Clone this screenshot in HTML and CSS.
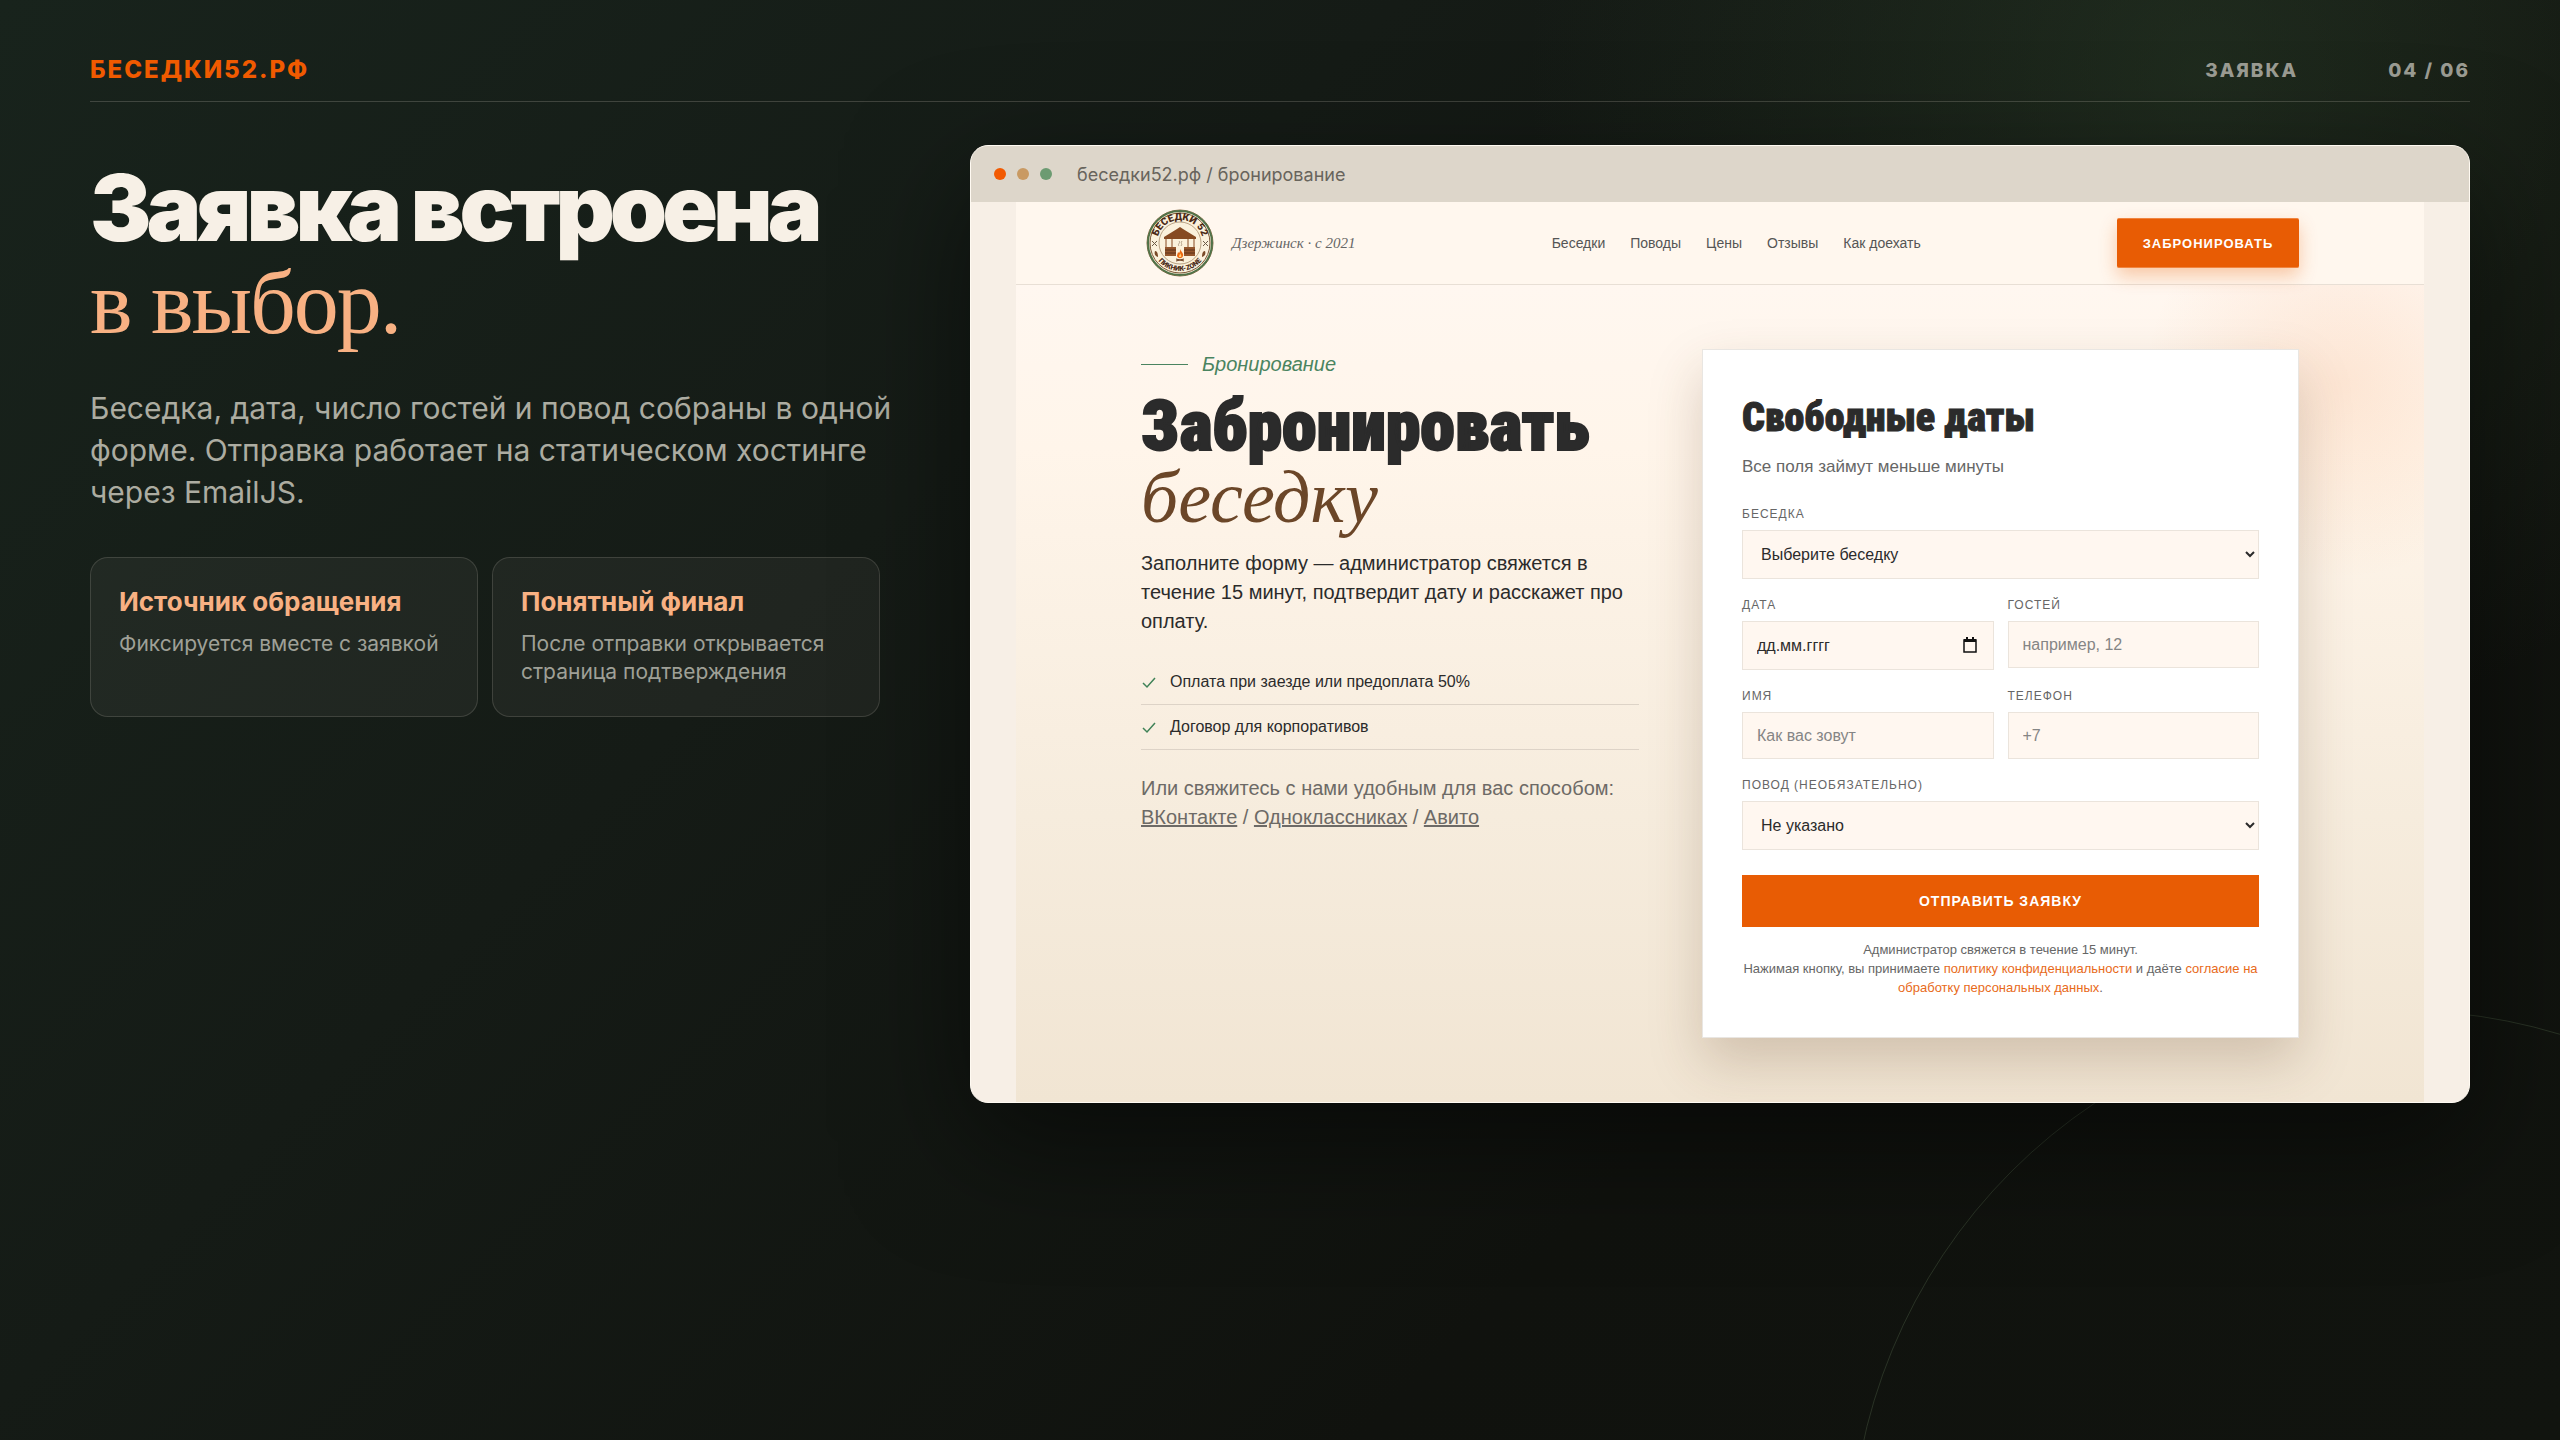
FILE: index.html
```html
<!DOCTYPE html>
<html lang="ru">
<head>
    <meta charset="UTF-8">
    <meta name="viewport" content="width=device-width, initial-scale=1.0">
    <title>Беседки52.рф — Заявка</title>
    <link rel="stylesheet" href="styles.css">
</head>
<body>
    <div class="slide">
        <div class="ring"></div>

        <header class="topbar">
            <div class="brand">БЕСЕДКИ52.РФ</div>
            <div class="topbar-meta">
                <span>ЗАЯВКА</span>
                <span>04 / 06</span>
            </div>
        </header>

        <main class="content">
            <section class="intro">
                <h1>Заявка встроена <em>в выбор.</em></h1>
                <p class="lead">Беседка, дата, число гостей и повод собраны в одной форме. Отправка работает на статическом хостинге через EmailJS.</p>
                <div class="cards">
                    <div class="card">
                        <h3>Источник обращения</h3>
                        <p>Фиксируется вместе с заявкой</p>
                    </div>
                    <div class="card">
                        <h3>Понятный финал</h3>
                        <p>После отправки открывается страница подтверждения</p>
                    </div>
                </div>
            </section>

            <!-- Окно браузера -->
            <section class="browser">
                <div class="browser-bar">
                    <span class="dot dot-red"></span>
                    <span class="dot dot-sand"></span>
                    <span class="dot dot-green"></span>
                    <span class="address">беседки52.рф / бронирование</span>
                </div>

                <div class="site">
                    <div class="site-header">
                        <div class="site-brand">
                            <svg class="logo" viewBox="0 0 68 68" role="img" aria-label="Беседки 52">
                                <defs>
                                    <path id="arc-top" d="M11 34a23 23 0 0 1 46 0"/>
                                    <path id="arc-bottom" d="M6 34a28 28 0 0 0 56 0"/>
                                </defs>
                                <circle cx="34" cy="34" r="33" fill="#fbf1dc" stroke="#8a6a45" stroke-width="1"/>
                                <circle cx="34" cy="34" r="32" fill="none" stroke="#4f7248" stroke-width="2"/>
                                <circle cx="34" cy="34" r="30" fill="none" stroke="#7a5636" stroke-width="1"/>
                                <circle cx="34" cy="34" r="21" fill="none" stroke="#b9a284" stroke-width="1"/>
                                <text class="logo-top"><textPath href="#arc-top" startOffset="50%" text-anchor="middle">БЕСЕДКИ 52</textPath></text>
                                <text class="logo-bottom"><textPath href="#arc-bottom" startOffset="50%" text-anchor="middle">ПИКНИК-ZONE</textPath></text>
                                <!-- беседка -->
                                <path d="M34 18l-3 2-13 8v2h32v-2l-13-8z" fill="#874a22"/>
                                <path d="M20 30v17M26 30v8M42 30v8M48 30v17" stroke="#874a22" stroke-width="1" fill="none"/>
                                <path d="M19 38h11v9H19zM38 38h11v9H38z" fill="#93552c"/>
                                <path d="M19 41h11M38 41h11M19 44h11M38 44h11" stroke="#5f3218" stroke-width="1"/>
                                <path d="M33 37c-2-2 2-3 0-5M35 37c2-2-1-3 1-5" stroke="#b3a089" stroke-width="1" fill="none"/>
                                <!-- костёр -->
                                <path d="M34 40c1 3 4 4 3 7-1 3-5 3-6 0 0-2 1-3 1-4l1 1c1-1 1-2 1-4z" fill="#ee6a12"/>
                                <path d="M34 44c1 2 2 3 1 4h-2c0-2 1-2 1-4z" fill="#ffd27a"/>
                                <path d="M30 52l8-2M30 50l8 2" stroke="#6b3d1e" stroke-width="1"/>
                                <path d="M6 32l5 5M11 32l-5 5M57 32l5 5M62 32l-5 5" stroke="#6b5a45" stroke-width="1"/>
                                <path d="M9 42c2 0 3 2 3 6-3-1-4-3-3-6zM59 42c-2 0-3 2-3 6 3-1 4-3 3-6z" fill="#7a4a28"/>
                            </svg>
                            <span class="since">Дзержинск · с 2021</span>
                        </div>
                        <nav class="site-nav">
                            <a href="#">Беседки</a>
                            <a href="#">Поводы</a>
                            <a href="#">Цены</a>
                            <a href="#">Отзывы</a>
                            <a href="#">Как доехать</a>
                        </nav>
                        <button class="book-btn" type="button">ЗАБРОНИРОВАТЬ</button>
                    </div>

                    <div class="booking">
                        <div class="booking-info">
                            <div class="eyebrow">Бронирование</div>
                            <h2>Забронировать <em>беседку</em></h2>
                            <p class="booking-text">Заполните форму — администратор свяжется в течение 15 минут, подтвердит дату и расскажет про оплату.</p>
                            <ul class="perks">
                                <li>
                                    <svg viewBox="0 0 16 16"><path d="M2 9l4 4 8-9"/></svg>
                                    Оплата при заезде или предоплата 50%
                                </li>
                                <li>
                                    <svg viewBox="0 0 16 16"><path d="M2 9l4 4 8-9"/></svg>
                                    Договор для корпоративов
                                </li>
                            </ul>
                            <p class="contacts">Или свяжитесь с нами удобным для вас способом: <a href="#">ВКонтакте</a> / <a href="#">Одноклассниках</a> / <a href="#">Авито</a></p>
                        </div>

                        <form class="booking-form">
                            <h3>Свободные даты</h3>
                            <p class="form-note">Все поля займут меньше минуты</p>
                            <div class="field">
                                <label for="place">Беседка</label>
                                <select id="place"><option>Выберите беседку</option></select>
                            </div>
                            <div class="field-row">
                                <div class="field">
                                    <label for="date">Дата</label>
                                    <div class="date-box">
                                        <input class="date-input" id="date" type="text" placeholder="дд.мм.гггг">
                                        <svg class="calendar" viewBox="0 0 14 16"><path d="M1 3h12v12H1z" fill="none" stroke="#111" stroke-width="1.5"/><path d="M1 2h12v3H1zM3 0h2v3H3zM9 0h2v3H9z" fill="#111"/></svg>
                                    </div>
                                </div>
                                <div class="field">
                                    <label for="guests">Гостей</label>
                                    <input id="guests" type="text" placeholder="например, 12">
                                </div>
                            </div>
                            <div class="field-row">
                                <div class="field">
                                    <label for="name">Имя</label>
                                    <input id="name" type="text" placeholder="Как вас зовут">
                                </div>
                                <div class="field">
                                    <label for="phone">Телефон</label>
                                    <input id="phone" type="tel" placeholder="+7">
                                </div>
                            </div>
                            <div class="field">
                                <label for="reason">Повод (необязательно)</label>
                                <select id="reason"><option>Не указано</option></select>
                            </div>
                            <button class="submit-btn" type="button">ОТПРАВИТЬ ЗАЯВКУ</button>
                            <p class="legal">Администратор свяжется в течение 15 минут.<br>Нажимая кнопку, вы принимаете <a href="#">политику конфиденциальности</a> и даёте <a href="#">согласие на обработку персональных данных</a>.</p>
                        </form>
                    </div>
                </div>
            </section>
        </main>
    </div>
</body>
</html>
```
FILE: styles.css
```css
* {
    box-sizing: border-box;
}

body {
    margin: 0;
    font-family: Inter, "Liberation Sans", sans-serif;
    color: #f7f0e6;
    background-color: #10130e;
}

h1, h2, h3, p, ul {
    margin: 0;
    padding: 0;
}

.slide {
    position: relative;
    min-height: 100vh;
    padding: 48px 90px 90px;
    overflow: hidden;
    background:
        radial-gradient(circle at 86% 5%, rgba(56, 84, 54, 0.34), transparent 26%),
        linear-gradient(135deg, #18231c 0%, #151b16 35%, #10120e 70%, #11140f 100%);
}

.ring {
    position: absolute;
    right: -390px;
    bottom: -670px;
    width: 1100px;
    height: 1100px;
    border: 1px solid rgba(120, 150, 110, 0.24);
    border-radius: 50%;
}

/* Шапка */
.topbar {
    display: flex;
    justify-content: space-between;
    align-items: center;
    height: 54px;
    padding-bottom: 11px;
    border-bottom: 1px solid rgba(247, 240, 230, 0.18);
}

.brand {
    font-size: 24px;
    font-weight: 800;
    letter-spacing: 2px;
    color: #f05a00;
}

.topbar-meta {
    display: flex;
    gap: 90px;
    padding-top: 3px;
    font-size: 19px;
    font-weight: 800;
    letter-spacing: 2px;
    color: #9b9c93;
}

.content {
    position: relative;
    display: grid;
    grid-template-columns: minmax(0, 790fr) minmax(0, 1500fr);
    gap: 90px;
    align-items: start;
    margin-top: 43px;
}

/* Левая колонка */
.intro {
    padding-top: 18px;
}

.intro h1 {
    font-size: 92px;
    line-height: 90px;
    font-weight: 900;
    letter-spacing: -5px;
    white-space: nowrap;
}

.intro h1 em {
    display: block;
    margin-top: 5px;
    font-family: "Liberation Serif", serif;
    font-size: 90px;
    font-style: normal;
    font-weight: 400;
    letter-spacing: -2px;
    color: #f8b183;
}

.lead {
    margin: 39px -16px 0 0;
    font-size: 30px;
    line-height: 42px;
    color: #acaca1;
}

.cards {
    display: grid;
    grid-template-columns: 1fr 1fr;
    gap: 14px;
    margin-top: 44px;
}

.card {
    min-height: 160px;
    padding: 28px;
    border: 1px solid rgba(247, 240, 230, 0.14);
    border-radius: 18px;
    background-color: rgba(247, 240, 230, 0.05);
}

.card h3 {
    font-size: 26px;
    line-height: 32px;
    font-weight: 700;
    color: #f8b183;
}

.card p {
    margin-top: 12px;
    font-size: 21px;
    line-height: 28px;
    color: #9fa097;
}

/* Окно браузера */
.browser {
    overflow: hidden;
    border: 1px solid #fffaf2;
    border-radius: 18px;
    background-color: #f7efe6;
    box-shadow: 0 40px 120px rgba(0, 0, 0, 0.5);
}

.browser-bar {
    display: flex;
    align-items: center;
    gap: 11px;
    height: 56px;
    padding: 0 23px;
    background-color: #ddd6ca;
}

.dot {
    width: 12px;
    height: 12px;
    border-radius: 50%;
}

.dot-red {
    background-color: #f25a02;
}

.dot-sand {
    background-color: #c99a63;
}

.dot-green {
    background-color: #6c9b72;
}

.address {
    margin-left: 14px;
    font-size: 18px;
    color: #68645c;
}

.site {
    margin: 0 45px;
    font-family: "Liberation Sans", Arial, sans-serif;
    color: #2b2b2b;
}

.site-header {
    display: flex;
    justify-content: space-between;
    align-items: center;
    height: 83px;
    padding: 0 125px;
    border-bottom: 1px solid #e8dfd5;
    background-color: #fff7ee;
}

.site-brand {
    display: flex;
    align-items: center;
    gap: 18px;
    padding-left: 5px;
}

.logo {
    width: 68px;
    height: 68px;
}

.logo-top {
    font-family: Roboto, sans-serif;
    font-size: 10px;
    font-weight: 900;
    fill: #4a2a17;
}

.logo-bottom {
    font-family: Roboto, sans-serif;
    font-size: 7px;
    font-weight: 900;
    fill: #4a2a17;
}

.since {
    font-family: "Liberation Serif", serif;
    font-size: 15px;
    font-style: italic;
    color: #666;
}

.site-nav {
    display: flex;
    gap: 25px;
    font-size: 14px;
}

.site-nav a {
    color: #555;
    text-decoration: none;
}

.book-btn {
    width: 182px;
    height: 50px;
    padding: 0;
    border: 1px solid #f08540;
    border-width: 1px 0;
    border-radius: 2px;
    background-color: #e85c04;
    box-shadow: 0 8px 18px rgba(232, 92, 4, 0.3);
    font-family: inherit;
    font-size: 13px;
    font-weight: 700;
    letter-spacing: 1px;
    color: #fff;
}

.booking {
    display: grid;
    grid-template-columns: minmax(0, 498fr) minmax(0, 597fr);
    gap: 63px;
    align-items: start;
    padding: 64px 125px;
    background:
        radial-gradient(circle at 94% 12%, rgba(240, 130, 60, 0.14), transparent 13%),
        linear-gradient(180deg, #fff7f0 0%, #fff5ea 20%, #f6ecdd 65%, #f1e5d3 100%);
}

.eyebrow {
    display: flex;
    align-items: center;
    gap: 14px;
    padding-top: 3px;
    font-size: 20px;
    line-height: 24px;
    font-style: italic;
    color: #4a8460;
}

.eyebrow::before {
    content: "";
    width: 47px;
    height: 1px;
    background-color: #4a8460;
}

.booking-info h2 {
    margin-top: 16px;
    font-family: Impact, "Roboto Condensed", Roboto, sans-serif;
    font-size: 70px;
    line-height: 68px;
    font-weight: 900;
    color: #2b2b2b;
    -webkit-text-stroke: 2px #2b2b2b;
}

.booking-info h2 em {
    display: block;
    margin-top: 3px;
    font-family: "Liberation Serif", serif;
    font-size: 74px;
    font-weight: 400;
    font-style: italic;
    color: #6b4628;
    -webkit-text-stroke: 0;
}

.booking-text {
    margin-top: 18px;
    font-size: 20px;
    line-height: 29px;
}

.perks {
    margin-top: 24px;
    list-style: none;
}

.perks li {
    display: flex;
    align-items: center;
    gap: 13px;
    height: 45px;
    border-bottom: 1px solid #ddd3c7;
    font-size: 16px;
}

.perks svg {
    width: 16px;
    height: 16px;
    fill: none;
    stroke: #3f8257;
    stroke-width: 1.5;
}

.contacts {
    margin-top: 24px;
    font-size: 20px;
    line-height: 29px;
    color: #6d6a66;
}

.contacts a {
    color: inherit;
}

/* Форма */
.booking-form {
    padding: 39px 39px 40px;
    border: 1px solid #e9e6e2;
    background-color: #fff;
    box-shadow: 0 24px 50px rgba(90, 60, 30, 0.22);
}

.booking-form h3 {
    font-family: Impact, "Roboto Condensed", Roboto, sans-serif;
    font-size: 40px;
    line-height: 58px;
    font-weight: 900;
    -webkit-text-stroke: 1px #2b2b2b;
}

.form-note {
    margin-top: 8px;
    font-size: 17px;
    line-height: 24px;
    color: #666;
}

.field {
    margin-top: 17px;
}

.form-note + .field {
    margin-top: 26px;
}

.field-row {
    display: grid;
    grid-template-columns: 1fr 1fr;
    gap: 14px;
}

.field label {
    display: block;
    margin-bottom: 7px;
    font-size: 12px;
    line-height: 18px;
    letter-spacing: 1px;
    text-transform: uppercase;
    color: #666;
}

.field input, .field select {
    display: block;
    width: 100%;
    height: 47px;
    padding: 0 14px;
    border: 1px solid #ebe4dc;
    border-radius: 0;
    background-color: #fff7f0;
    font-family: inherit;
    font-size: 16px;
    color: #2b2b2b;
}

.field select {
    height: 49px;
}

.field input::placeholder {
    color: #858585;
}

.date-box {
    position: relative;
}

.field .date-input {
    height: 49px;
}

.field .date-input::placeholder {
    color: #2b2b2b;
}

.calendar {
    position: absolute;
    top: 16px;
    right: 17px;
    width: 14px;
    height: 16px;
}

.submit-btn {
    display: block;
    width: 100%;
    height: 52px;
    margin-top: 25px;
    border: 0;
    background-color: #e85c04;
    font-family: inherit;
    font-size: 14px;
    font-weight: 700;
    letter-spacing: 1px;
    color: #fff;
}

.legal {
    margin-top: 13px;
    font-size: 13px;
    line-height: 19px;
    text-align: center;
    color: #666;
}

.legal a {
    color: #e86a1a;
    text-decoration: none;
}
```
